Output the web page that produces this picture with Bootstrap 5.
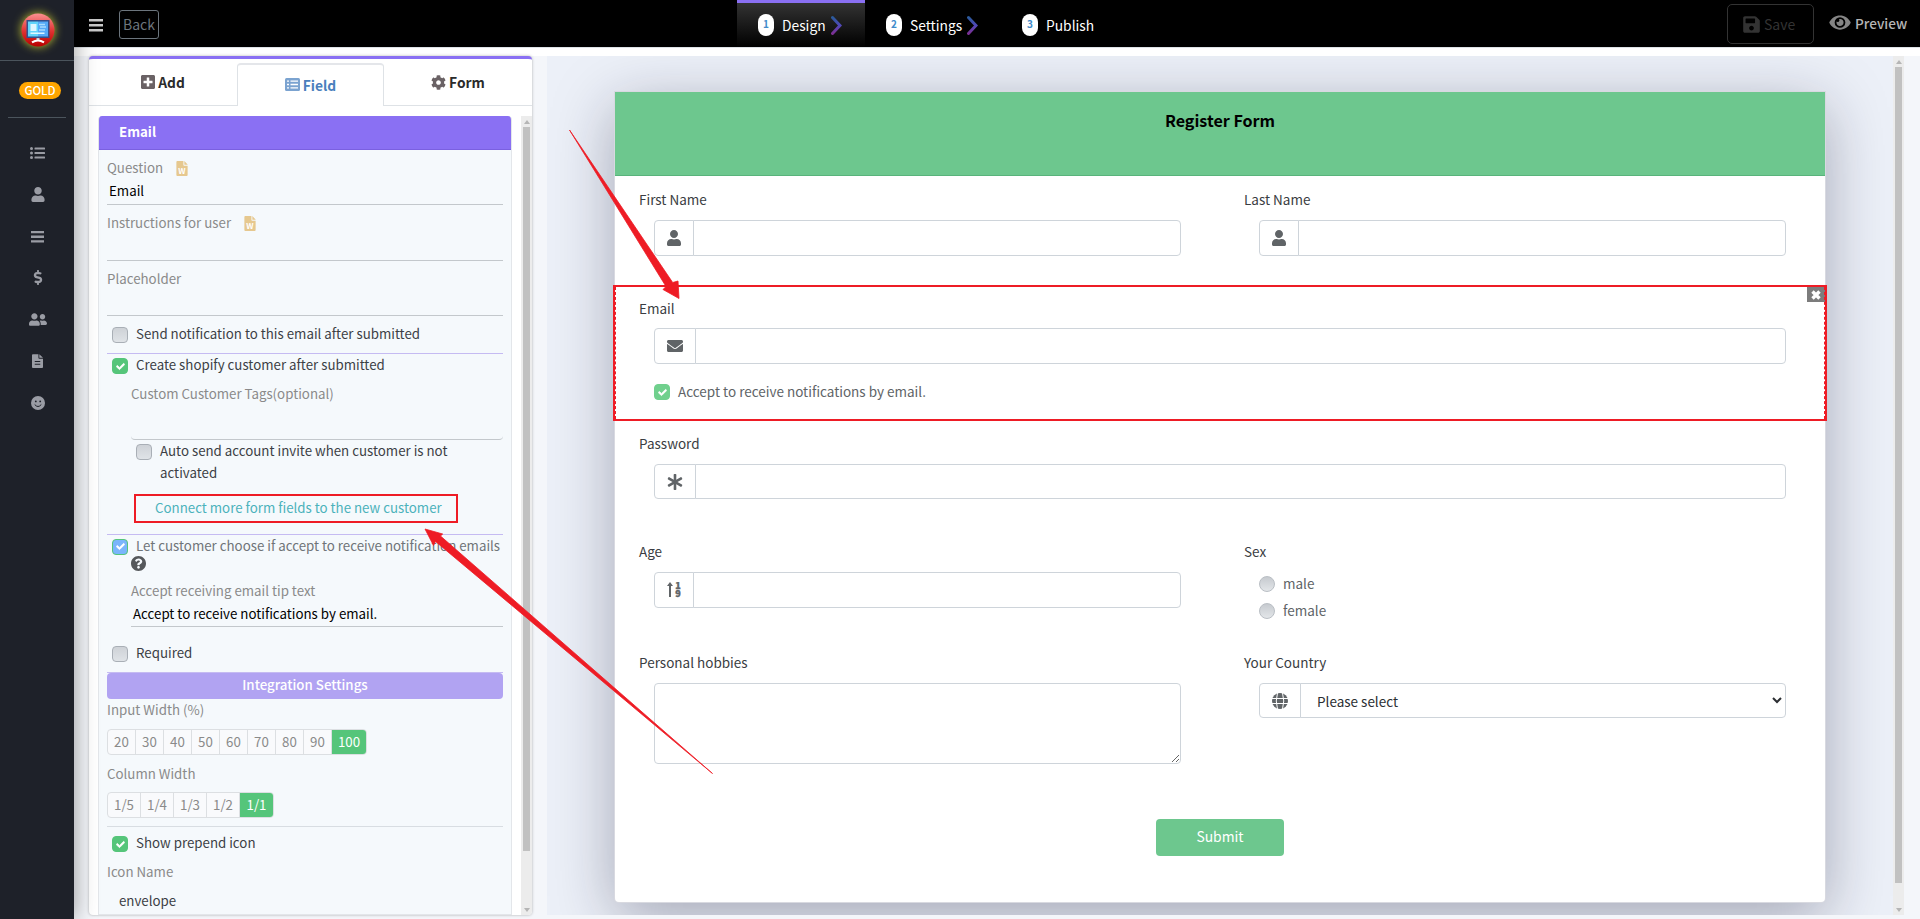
<!DOCTYPE html>
<html lang="en">
<head>
  <meta charset="UTF-8">
  <meta name="viewport" content="width=device-width, initial-scale=1.0">
  <title>Register Form</title>
  <link href="https://cdn.jsdelivr.net/npm/bootstrap@5.3.2/dist/css/bootstrap.min.css" rel="stylesheet">
  <style>
    body {
      font-family: "Noto Sans CJK SC", "Open Sans", sans-serif;
      font-size: 14px;
      line-height: 24px;
      color: #3c3f45;
      height: 919px;
      overflow: hidden;
      background: #f4f6fa;
    }
    svg { fill: currentColor; flex: none; display: block; }

    /* sidebar */
    .side { width: 74px; flex: none; background: #1e2129; color: #9a9ca4; box-shadow: 0 0 22px rgba(0,0,0,.4); z-index: 3; }
    .side-logo { height: 61px; border-bottom: 1px solid #4b545c; padding-left: 1px; }
    .side-logo svg { filter: drop-shadow(0 0 5px #c8c832); }
    .gold { width: 42px; height: 17px; margin: 21px 0 17px 19px; border-radius: 9px; background: #ffa500; color: #fff; font-size: 11.5px; line-height: 17px; font-weight: 500; text-align: center; }
    .side-line { margin: 1px 8px 14px; height: 1px; background: #4b545c; }
    .side-item { height: 41.7px; padding-left: 1px; }

    /* top bar */
    .topbar { height: 47px; background: #000; color: #fff; }
    .gap-bar { height: 9px; background: #fff; border-top: 1px solid #dee2e6; }
    .back-btn { width: 40px; height: 29px; border: 1px solid #6c757d; border-radius: 3px; color: #6c757d; line-height: 26px; text-align: center; margin: 10px 0 0 16px; }
    .step { height: 47px; padding: 10px 0 0 21px; width: 128px; border-top: 3px solid transparent; font-size: 13.8px; }
    .step.on { border-color: #8a70f3; background: linear-gradient(#333, #000); }
    .step b { width: 16px; height: 22px; border-radius: 8px; background: #fff; color: #428bca; font-size: 10px; line-height: 20px; text-align: center; margin: 1px 8px 0 0; }
    .save-btn { width: 87px; height: 40px; border: 1px solid #333; border-radius: 5px; color: #333; padding-left: 15px; }
    .preview-btn { color: #b5b5b5; font-weight: 500; margin: 0 16px 0 15px; width: 75px; padding-bottom: 6px; font-size: 13.6px; }

    /* editor card */
    .editor { width: 443px; height: 859px; flex: none; margin-left: 15px; background: #fff; border-top: 3px solid #8a70f3; border-radius: 4px; box-shadow: 0 0 3px rgba(0,0,0,.3); overflow: hidden; font-size: 13.3px; }
    .tabs { height: 47px; font-size: 13.8px; font-weight: 700; color: #2b2b2b; }
    .tab { flex: 1; border-bottom: 1px solid #dee2e6; gap: 3px; }
    .tab svg { color: #6a6265; }
    .tab.on { flex: 0 0 147px; margin-top: 4px; padding-bottom: 2px; border: 1px solid #dee2e6; border-top: 2px solid #e4e6ea; border-bottom: 0; border-radius: 4px 4px 0 0; color: #4a80bd; }
    .tab.on svg { color: #7ba3d0; }
    .panel { width: 414px; flex: none; margin: 10px 9px 0 9px; background: #f5f9fc; border: 1px solid #e3e6ea; border-top: 0; border-radius: 4px 4px 0 0; overflow: hidden; padding: 0 8px; }
    .panel-head { height: 34px; margin: 0 -9px 7px; padding-left: 21px; background: #8a70f3; border-bottom: 1px solid #7a60e0; color: #fff; font-weight: 700; line-height: 32px; }
    .lbl { color: #8a8a8a; height: 24px; padding-bottom: 2px; display: flex; align-items: center; }
    .lbl svg { margin-left: 13px; }
    .line-input { height: 24px; line-height: 20px; border-bottom: 1px solid #c3c8cc; color: #000; padding-left: 2px; }
    .indent { margin-left: 24px; }
    .opt { display: flex; align-items: center; gap: 8px; padding: 0 0 2px 5px; }
    .box { width: 16px; height: 16px; margin-top: 2px; border: 1px solid #a9afb6; border-radius: 4px; background: linear-gradient(#ced2d7, #dfe3e7); display: flex; align-items: center; justify-content: center; flex: none; color: #fff; }
    .box.ok { background: #55c57a; border-color: #55c57a; }
    .box.blue { background: #7ab5fb; border-color: #55c57a; }
    .box.pale { background: #70d08d; border-color: #70d08d; }
    .box svg { stroke: currentColor; stroke-width: 40; }
    .violet-line { border-bottom: 1px solid #c5bbf2; }
    .link-box { width: 324px; height: 29px; margin: 10px 0 11px 27px; border: 2px solid #ee1c25; color: #4bb2bb; line-height: 24px; padding-left: 19px; white-space: nowrap; }
    .integ { height: 26px; border-radius: 4px; background: #b1a3f2; color: #fff; font-weight: 500; text-align: center; }
    .seg { display: flex; width: max-content; height: 26px; border: 1px solid #dcdfe2; border-radius: 4px; background: #f9fafc; color: #8a8a8a; line-height: 24px; overflow: hidden; }
    .seg span { width: 28px; text-align: center; border-right: 1px solid #dcdfe2; }
    .seg.frac span { width: 33px; }
    .seg span.on { background: #55c57a; color: #fff; border: 0; }
    .seg span.on.wide { width: 34px; }

    /* scroll bars */
    .bar { width: 11px; background: #ececec; flex: none; }
    .bar i { display: block; width: 7px; background: #c1c1c1; }
    .bar svg { color: #b5b5b5; margin: 4px 0 3px; }

    /* form preview */
    .stage { width: 1357px; height: 859px; flex: none; margin-left: 15px; background: #ecf0f8; overflow: hidden; font-size: 13.5px; }
    .paper { width: 1210px; height: 810px; flex: none; margin: 36px 0 0 68px; background: #fff; box-shadow: 0 0 0 1px #d8d9e0, 0 15px 62px rgba(20,20,50,.34); border-radius: 0 0 4px 4px; }
    .paper-head { height: 84px; background: #6dc78e; border-bottom: 1px solid #59b37b; color: #000; font-size: 16.1px; font-weight: 700; text-align: center; padding-top: 16px; }
    .fld { padding: 12px 39px 0; color: #3a3d42; }
    .fld > label { display: block; margin: 0 0 8px -15px; height: 24px; line-height: 22px; }
    .input-group { height: 36px; flex-wrap: nowrap; }
    .input-group-text { width: 40px; padding: 0; justify-content: center; background: #fff; border-color: #ced4da; color: #606467; border-radius: 4px; }
    .input-group-text.w42 { width: 42px; }
    .form-control { border-color: #ced4da; border-radius: 4px; font-size: 13.5px; background: #fff; }
    select.form-control { appearance: auto; padding: 0 3px 0 12px; color: #2c2f33; }
    .rad-row { height: 27px; padding-bottom: 2px; color: #606467; }
    .rad { width: 16px; height: 16px; margin-top: 2px; border-radius: 50%; border: 1px solid #b9bec4; background: linear-gradient(#c6cacf, #e3e6e9); }
    .picked { height: 135px; }
    .pick-frame { inset: 0 -2px -1px; border: 2px solid #ee1c25; }
    .pick-frame::after { content: ""; position: absolute; inset: 0; border: dashed #ee1c25; border-width: 0 1px; }
    .close-badge { right: 0; top: 2px; width: 18px; height: 15px; background: #7c7c7c; color: #fff; }
    .submit { width: 128px; height: 37px; margin: 0 auto; background: #6dc78e; color: #fff; border-radius: 4px; line-height: 35px; text-align: center; font-size: 13.9px; }
    .marks { left: 0; top: 0; z-index: 9; pointer-events: none; color: #ee1c25; stroke: #ee1c25; stroke-width: .8; }
  </style>
</head>
<body>
  <svg width="0" height="0" class="position-absolute">
    <symbol id="user" viewBox="0 0 448 512"><path d="M224 256c70.7 0 128-57.3 128-128S294.7 0 224 0 96 57.3 96 128s57.3 128 128 128zm89.6 32h-16.7c-22.2 10.2-46.9 16-72.9 16s-50.6-5.8-72.9-16h-16.7C60.2 288 0 348.2 0 422.4V464c0 26.5 21.5 48 48 48h352c26.5 0 48-21.5 48-48v-41.6c0-74.2-60.2-134.4-134.4-134.4z"/></symbol>
    <symbol id="envelope" viewBox="0 0 512 512"><path d="M502.3 190.8c3.9-3.1 9.7-.2 9.7 4.7V400c0 26.5-21.5 48-48 48H48c-26.5 0-48-21.5-48-48V195.6c0-5 5.7-7.8 9.7-4.7 22.4 17.4 52.1 39.5 154.1 113.6 21.1 15.4 56.7 47.8 92.2 47.6 35.7.3 72-32.8 92.3-47.6 102-74.1 131.6-96.3 154-113.7zM256 320c23.2.4 56.6-29.2 73.4-41.4 132.7-96.3 142.8-104.7 173.4-128.7 5.8-4.5 9.2-11.5 9.2-18.9v-19c0-26.5-21.5-48-48-48H48c-26.5 0-48 21.5-48 48v19c0 7.4 3.4 14.3 9.2 18.9 30.6 23.9 40.7 32.4 173.4 128.7 16.8 12.2 50.2 41.8 73.4 41.4z"/></symbol>
    <symbol id="check" viewBox="-20 -20 552 552"><path d="M173.898 439.404l-166.4-166.4c-9.997-9.997-9.997-26.206 0-36.204l36.203-36.204c9.997-9.998 26.207-9.998 36.204 0L192 312.69 432.095 72.596c9.997-9.997 26.207-9.997 36.204 0l36.203 36.204c9.997 9.997 9.997 26.206 0 36.204l-294.4 294.401c-9.998 9.997-26.207 9.997-36.204-.001z"/></symbol>
    <symbol id="bars" viewBox="0 0 14 14"><path d="M0 1h14v2.5H0zM0 6h14v2.5H0zM0 11h14v2.5H0z"/></symbol>
    <symbol id="list" viewBox="0 0 15 12"><circle cx="1.5" cy="1.5" r="1.5"/><circle cx="1.5" cy="6" r="1.5"/><circle cx="1.5" cy="10.5" r="1.5"/><rect x="4.5" y=".5" width="10.5" height="2" rx=".5"/><rect x="4.5" y="5" width="10.5" height="2" rx=".5"/><rect x="4.5" y="9.5" width="10.5" height="2" rx=".5"/></symbol>
    <symbol id="word" viewBox="0 0 12 16"><path d="M1 0h6.500v4.200q0 .8.800.8H12v10q0 1-1 1H1q-1 0-1-1V1q0-1 1-1zM8.500 0L12 3.800V4H8.500z"/><text x="6" y="13.500" font-size="8.500" font-weight="700" text-anchor="middle" fill="#fff">W</text></symbol>
    <symbol id="up" viewBox="0 0 6 4"><path d="M0 4l3-4 3 4z"/></symbol>
    <symbol id="down" viewBox="0 0 6 4"><path d="M0 0l3 4 3-4z"/></symbol>
  </svg>

  <div class="d-flex h-100">
    <!-- sidebar -->
    <div class="side d-flex flex-column position-relative">
      <div class="side-logo d-flex align-items-center justify-content-center">
        <svg width="34" height="34" viewBox="0 0 34 34">
          <defs><linearGradient id="red" x2="0" y2="1"><stop stop-color="#fb9090"/><stop offset=".55" stop-color="#df3030"/><stop offset="1" stop-color="#b80000"/></linearGradient></defs>
          <circle cx="17" cy="17" r="16.5" fill="url(#red)"/>
          <rect x="5.5" y="7" width="23" height="18" fill="#344f8c"/>
          <path d="M7 8.500h10v15H7z" fill="#61d4fb"/><path d="M17 8.500h10v15H17z" fill="#55aaf8"/>
          <path d="M9.500 11h6v7h-6zM9.500 19.500h14v1.500h-14z" fill="#e0f6ff"/><path d="M18 11.500h6M19 14h6M18 17h6" stroke="#a9dcff" stroke-width="1.3"/>
          <path d="M15.500 25h3v2.500h-3z" fill="#c5cddc"/><path d="M11 29.300q6-3.800 12 0" stroke="#fff" stroke-width="2" fill="none"/>
        </svg>
      </div>
      <div class="gold">GOLD</div>
      <div class="side-line"></div>
      <div class="side-item d-flex align-items-center justify-content-center"><svg width="15" height="12"><use href="#list"/></svg></div>
      <div class="side-item d-flex align-items-center justify-content-center"><svg width="14" height="15"><use href="#user"/></svg></div>
      <div class="side-item d-flex align-items-center justify-content-center"><svg width="13" height="13"><use href="#bars"/></svg></div>
      <div class="side-item d-flex align-items-center justify-content-center"><svg width="10" height="15" viewBox="0 0 288 512"><path d="M209.2 233.4l-108-31.6C88.7 198.2 80 186.5 80 173.5c0-16.3 13.2-29.5 29.5-29.5h66.3c12.2 0 24.2 3.7 34.2 10.5 6.1 4.1 14.3 3.1 19.5-2l34.8-34c7.1-6.9 6.1-18.4-1.8-24.5C238 74.8 207.4 64.1 176 64V16c0-8.8-7.2-16-16-16h-32c-8.8 0-16 7.2-16 16v48h-2.5C45.8 64-5.4 118.7.5 183.6c4.2 46.1 39.4 83.6 83.8 96.6l102.5 30c12.5 3.7 21.2 15.3 21.2 28.3 0 16.3-13.2 29.5-29.5 29.5h-66.3C100 368 88 364.3 78 357.500c-6.100-4.100-14.300-3.100-19.500 2l-34.800 34c-7.100 6.900-6.100 18.400 1.800 24.500 24.500 19.200 55.100 29.900 86.500 30v48c0 8.800 7.200 16 16 16h32c8.800 0 16-7.200 16-16v-48.200c46.600-.9 90.300-28.600 105.700-72.700 21.500-61.600-14.600-124.800-72.500-141.700z"/></svg></div>
      <div class="side-item d-flex align-items-center justify-content-center"><svg width="18" height="15" viewBox="0 0 640 512"><path d="M192 256c61.9 0 112-50.1 112-112S253.9 32 192 32 80 82.1 80 144s50.1 112 112 112zm76.8 32h-8.3c-20.8 10-43.9 16-68.5 16s-47.6-6-68.5-16h-8.3C51.6 288 0 339.6 0 403.2V432c0 26.5 21.5 48 48 48h288c26.5 0 48-21.5 48-48v-28.8c0-63.6-51.6-115.2-115.2-115.2zM480 256c53 0 96-43 96-96s-43-96-96-96-96 43-96 96 43 96 96 96zm48 32h-3.8c-13.9 4.8-28.6 8-44.2 8s-30.3-3.2-44.2-8H432c-20.4 0-39.2 5.9-55.7 15.4 24.4 26.3 39.7 61.2 39.7 99.8v38.4c0 2.2-.5 4.3-.6 6.4H592c26.5 0 48-21.5 48-48 0-61.9-50.1-112-112-112z"/></svg></div>
      <div class="side-item d-flex align-items-center justify-content-center"><svg width="11" height="14" viewBox="0 0 12 15"><path fill-rule="evenodd" d="M1 0h6v4q0 1 1 1h4v9q0 1-1 1H1q-1 0-1-1V1q0-1 1-1zm7 0l4 4H8zM3 7.500v1h6v-1zm0 3v1h6v-1z"/></svg></div>
      <div class="side-item d-flex align-items-center justify-content-center"><svg width="14" height="14" viewBox="0 0 14 14"><circle cx="7" cy="7" r="7"/><g fill="#1e2129"><circle cx="4.8" cy="5.4" r=".9"/><circle cx="9.2" cy="5.4" r=".9"/></g><path d="M3.700 8.500q3.300 4 6.600 0" fill="none" stroke="#1e2129"/></svg></div>
    </div>

    <div class="flex-grow-1">
      <!-- top bar -->
      <div class="topbar d-flex">
        <div style="width: 663px" class="d-flex">
          <svg width="14" height="14" style="margin: 18px 0 0 15px; color: #c9c9c9"><use href="#bars"/></svg>
          <div class="back-btn">Back</div>
        </div>
        <div class="step on d-flex"><b>1</b>Design<svg width="11" height="20" viewBox="0 0 11 20" style="margin: 2px 0 0 5px"><defs><linearGradient id="chev" x2="0" y2="1"><stop stop-color="#2b5a9b"/><stop offset=".5" stop-color="#5148b8"/><stop offset="1" stop-color="#7c2f92"/></linearGradient></defs><path d="M1.500 2.500L9 10.500l-7.500 8" fill="none" stroke="url(#chev)" stroke-width="3" stroke-linecap="round"/></svg></div>
        <div class="step d-flex" style="width: 136px"><b>2</b>Settings<svg width="11" height="20" viewBox="0 0 11 20" style="margin: 2px 0 0 5px"><path d="M1.500 2.500L9 10.500l-7.500 8" fill="none" stroke="url(#chev)" stroke-width="3" stroke-linecap="round"/></svg></div>
        <div class="step d-flex"><b>3</b>Publish</div>
        <div class="ms-auto d-flex" style="padding-top: 4px">
          <div class="save-btn d-flex align-items-center"><svg width="17" height="19" viewBox="0 0 448 512" class="me-1"><path d="M433.941 129.941l-83.882-83.882A48 48 0 0 0 316.118 32H48C21.49 32 0 53.49 0 80v352c0 26.51 21.49 48 48 48h352c26.51 0 48-21.49 48-48V163.882a48 48 0 0 0-14.059-33.941zM224 416c-35.346 0-64-28.654-64-64 0-35.346 28.654-64 64-64s64 28.654 64 64c0 35.346-28.654 64-64 64zm96-304.52V212c0 6.627-5.373 12-12 12H76c-6.627 0-12-5.373-12-12V108c0-6.627 5.373-12 12-12h228.52c3.183 0 6.235 1.264 8.485 3.515l3.48 3.48A11.996 11.996 0 0 1 320 111.48z"/></svg>Save</div>
          <div class="preview-btn d-flex align-items-center"><svg width="22" height="19" viewBox="0 0 576 512" class="me-1" color="#858585"><path d="M572.52 241.4C518.29 135.59 410.93 64 288 64S57.68 135.64 3.48 241.41a32.35 32.35 0 0 0 0 29.19C57.71 376.41 165.07 448 288 448s230.32-71.64 284.52-177.41a32.35 32.35 0 0 0 0-29.19zM288 400a144 144 0 1 1 144-144 143.93 143.93 0 0 1-144 144zm0-240a95.31 95.31 0 0 0-25.31 3.79 47.85 47.85 0 0 1-66.9 66.9A95.78 95.78 0 1 0 288 160z"/></svg>Preview</div>
        </div>
      </div>
      <div class="gap-bar"></div>

      <div class="d-flex">
        <!-- field editor -->
        <div class="editor">
          <div class="tabs d-flex">
            <div class="tab d-flex align-items-center justify-content-center"><svg width="14" height="16" viewBox="0 0 448 512"><path d="M400 32H48C21.5 32 0 53.5 0 80v352c0 26.5 21.5 48 48 48h352c26.5 0 48-21.5 48-48V80c0-26.5-21.5-48-48-48zm-32 252c0 6.6-5.4 12-12 12h-92v92c0 6.6-5.4 12-12 12h-56c-6.6 0-12-5.4-12-12v-92H92c-6.6 0-12-5.4-12-12v-56c0-6.6 5.4-12 12-12h92v-92c0-6.6 5.4-12 12-12h56c6.6 0 12 5.4 12 12v92h92c6.6 0 12 5.4 12 12v56z"/></svg>Add</div>
            <div class="tab on d-flex align-items-center justify-content-center"><svg width="15" height="13" viewBox="0 0 15 13"><rect width="15" height="13" rx="1.5"/><path d="M2 3.200h2M2 6.500h2M2 9.800h2M5.500 3.200H13M5.500 6.500H13M5.500 9.800H13" stroke="#fff" stroke-width="1.3"/></svg>Field</div>
            <div class="tab d-flex align-items-center justify-content-center"><svg width="15" height="15" viewBox="0 0 512 512"><path d="M487.4 315.7l-42.6-24.6c4.3-23.2 4.3-47 0-70.2l42.6-24.6c4.9-2.8 7.1-8.6 5.5-14-11.1-35.6-30-67.8-54.7-94.6-3.8-4.1-10-5.1-14.8-2.3L380.8 110c-17.9-15.4-38.5-27.3-60.8-35.1V25.8c0-5.6-3.9-10.5-9.4-11.7-36.7-8.2-74.3-7.8-109.2 0-5.5 1.2-9.4 6.1-9.4 11.7V75c-22.2 7.9-42.8 19.8-60.8 35.1L88.7 85.5c-4.9-2.8-11-1.9-14.8 2.3-24.7 26.7-43.6 58.9-54.7 94.6-1.7 5.4.6 11.2 5.5 14L67.3 221c-4.3 23.2-4.3 47 0 70.2l-42.6 24.6c-4.9 2.8-7.1 8.6-5.5 14 11.1 35.6 30 67.8 54.7 94.6 3.8 4.1 10 5.1 14.8 2.3l42.6-24.6c17.9 15.4 38.5 27.3 60.8 35.1v49.2c0 5.6 3.9 10.5 9.4 11.7 36.7 8.2 74.3 7.8 109.2 0 5.5-1.2 9.4-6.1 9.4-11.7v-49.2c22.2-7.9 42.8-19.8 60.8-35.1l42.6 24.6c4.9 2.8 11 1.9 14.8-2.3 24.7-26.7 43.6-58.9 54.7-94.6 1.5-5.5-.7-11.3-5.6-14.1zM256 336c-44.1 0-80-35.9-80-80s35.9-80 80-80 80 35.9 80 80-35.9 80-80 80z"/></svg>Form</div>
          </div>
          <div class="d-flex" style="height: 809px">
            <div class="panel">
              <div class="panel-head">Email</div>
              <div class="lbl">Question <svg width="12" height="15" color="#e6c88f"><use href="#word"/></svg></div>
              <div class="line-input">Email</div>
              <div class="lbl" style="margin-top: 7px">Instructions for user <svg width="12" height="15" color="#e6c88f"><use href="#word"/></svg></div>
              <div class="line-input" style="height: 25px"></div>
              <div class="lbl" style="margin-top: 7px">Placeholder</div>
              <div class="line-input"></div>
              <div class="opt violet-line" style="height: 38px"><span class="box"></span>Send notification to this email after submitted</div>
              <div class="opt" style="height: 24px"><span class="box ok"><svg width="9" height="9"><use href="#check"/></svg></span>Create shopify customer after submitted</div>
              <div class="indent">
                <div class="lbl" style="margin-top: 5px">Custom Customer Tags(optional)</div>
                <div class="line-input" style="height: 33px; border-radius: 4px"></div>
                <div class="opt align-items-start pb-0" style="line-height: 22px"><span class="box" style="margin-top: 4px"></span><span>Auto send account invite when customer is not<br>activated</span></div>
              </div>
              <div class="link-box">Connect more form fields to the new customer</div>
              <div class="violet-line"></div>
              <div class="opt text-nowrap" style="height: 23px; color: #6f7478"><span class="box blue"><svg width="9" height="9"><use href="#check"/></svg></span>Let customer choose if accept to receive notification emails</div>
              <div class="indent">
                <svg width="15" height="15" viewBox="8 8 496 496" style="margin: -2px 0 9px; color: #55585b"><path d="M504 256c0 136.997-111.043 248-248 248S8 392.997 8 256C8 119.083 119.043 8 256 8s248 111.083 248 248zM262.655 90c-54.497 0-89.255 22.957-116.549 63.758-3.536 5.286-2.353 12.415 2.715 16.258l34.699 26.31c5.205 3.947 12.621 3.008 16.665-2.122 17.864-22.658 30.113-35.797 57.303-35.797 20.429 0 45.698 13.148 45.698 32.958 0 14.976-12.363 22.667-32.534 33.976C247.128 238.528 216 254.941 216 296v4c0 6.627 5.373 12 12 12h56c6.627 0 12-5.373 12-12v-1.333c0-28.462 83.186-29.647 83.186-106.667 0-58.002-60.165-102-116.531-102zM256 338c-25.365 0-46 20.635-46 46 0 25.364 20.635 46 46 46s46-20.636 46-46c0-25.365-20.635-46-46-46z"/></svg>
                <div class="lbl">Accept receiving email tip text</div>
                <div class="line-input" style="height: 23px">Accept to receive notifications by email.</div>
              </div>
              <div class="opt violet-line" style="height: 46px; padding-top: 9px"><span class="box"></span>Required</div>
              <div class="integ">Integration Settings</div>
              <div class="lbl">Input Width (%)</div>
              <div class="seg" style="margin: 6px 0 8px"><span>20</span><span>30</span><span>40</span><span>50</span><span>60</span><span>70</span><span>80</span><span>90</span><span class="on wide">100</span></div>
              <div class="lbl">Column Width</div>
              <div class="seg frac" style="margin: 5px 0 8px"><span>1/5</span><span>1/4</span><span>1/3</span><span>1/2</span><span class="on">1/1</span></div>
              <div style="border-bottom: 1px solid #d8dde2"></div>
              <div class="opt" style="height: 24px; margin: 5px 0"><span class="box ok"><svg width="9" height="9"><use href="#check"/></svg></span>Show prepend icon</div>
              <div class="lbl">Icon Name</div>
              <div style="margin: 4px 0 0 12px">envelope</div>
            </div>
            <div class="bar d-flex flex-column align-items-center" style="margin-top: 10px"><svg width="6" height="4"><use href="#up"/></svg><i style="height: 724px"></i><svg width="6" height="4" class="mt-auto"><use href="#down"/></svg></div>
          </div>
        </div>

        <!-- form preview -->
        <div class="stage d-flex">
          <div class="paper">
            <div class="paper-head">Register Form</div>
            <div class="row g-0" style="height: 109px">
              <div class="col-6 fld"><label>First Name</label>
                <div class="input-group"><span class="input-group-text"><svg width="14" height="16"><use href="#user"/></svg></span><input class="form-control"></div></div>
              <div class="col-6 fld"><label>Last Name</label>
                <div class="input-group"><span class="input-group-text"><svg width="14" height="16"><use href="#user"/></svg></span><input class="form-control"></div></div>
            </div>
            <div class="fld picked position-relative">
              <label style="margin-bottom: 7px">Email</label>
              <div class="input-group"><span class="input-group-text w42"><svg width="16" height="16"><use href="#envelope"/></svg></span><input class="form-control"></div>
              <div class="d-flex align-items-center gap-2" style="margin-top: 15px; color: #606467"><span class="box pale"><svg width="9" height="9"><use href="#check"/></svg></span>Accept to receive notifications by email.</div>
              <div class="close-badge position-absolute d-flex align-items-center justify-content-center"><svg width="10" height="10" viewBox="0 0 10 10"><path d="M1.500 1.500l7 7M8.500 1.500l-7 7" stroke="#fff" stroke-width="3.4"/></svg></div>
              <div class="pick-frame position-absolute"></div>
            </div>
            <div class="fld" style="height: 108px"><label>Password</label>
              <div class="input-group" style="height: 35px"><span class="input-group-text w42"><svg width="16" height="16" viewBox="0 0 512 512"><path d="M478.21 334.093L336 256l142.21-78.093c11.795-6.477 15.961-21.384 9.232-33.037l-19.48-33.741c-6.728-11.653-21.72-15.499-33.227-8.523L296 186.718l3.475-162.204C299.763 11.061 288.937 0 275.48 0h-38.96c-13.456 0-24.283 11.061-23.994 24.514L216 186.718 77.265 102.607c-11.506-6.976-26.499-3.13-33.227 8.523l-19.48 33.741c-6.728 11.653-2.562 26.56 9.233 33.037L176 256 33.79 334.093c-11.795 6.477-15.961 21.384-9.232 33.037l19.48 33.741c6.728 11.653 21.721 15.499 33.227 8.523L216 325.282l-3.475 162.204C212.237 500.939 223.064 512 236.52 512h38.961c13.456 0 24.283-11.061 23.995-24.514L296 325.282l138.735 84.111c11.506 6.976 26.499 3.13 33.227-8.523l19.48-33.741c6.728-11.653 2.563-26.559-9.232-33.036z"/></svg></span><input class="form-control"></div></div>
            <div class="row g-0" style="height: 111px">
              <div class="col-6 fld"><label>Age</label>
                <div class="input-group"><span class="input-group-text"><svg width="14" height="16" viewBox="0 0 14 16"><path d="M3 0l3 4H4v11H2V4H0z"/><text x="11" y="7" font-size="9" font-weight="900" text-anchor="middle" stroke="currentColor" stroke-width=".4">1</text><text x="11" y="15" font-size="9" font-weight="900" text-anchor="middle" stroke="currentColor" stroke-width=".4">9</text></svg></span><input class="form-control"></div></div>
              <div class="col-6 fld"><label>Sex</label>
                <div class="rad-row d-flex align-items-center gap-2" style="margin-top: -2px"><span class="rad"></span>male</div>
                <div class="rad-row d-flex align-items-center gap-2"><span class="rad"></span>female</div></div>
            </div>
            <div class="row g-0" style="height: 180px">
              <div class="col-6 fld"><label>Personal hobbies</label>
                <textarea class="form-control" style="height: 81px"></textarea></div>
              <div class="col-6 fld"><label>Your Country</label>
                <div class="input-group" style="height: 35px"><span class="input-group-text w42"><svg width="16" height="16" viewBox="0 0 16 16"><circle cx="8" cy="8" r="8"/><path d="M0 5.500h16M0 10.500h16M5.500 0q-2.500 8 0 16M10.500 0q2.500 8 0 16" fill="none" stroke="#fff"/></svg></span><select class="form-control"><option>Please select</option></select></div></div>
            </div>
            <div class="submit">Submit</div>
          </div>
          <div class="bar ms-auto d-flex flex-column align-items-center"><svg width="6" height="4"><use href="#up"/></svg><i style="height: 816px"></i><svg width="6" height="4" class="mt-auto"><use href="#down"/></svg></div>
        </div>
      </div>
    </div>
  </div>

  <!-- pointer arrows over the page -->
  <svg class="marks position-absolute" width="1920" height="919">
    <path d="M569.500 130L672.700 282.500 678 281 679 298.500 663 289.500 666 286.500z"/>
    <path d="M712.500 773.500L440.500 536 442.700 534 425 529 433.500 545.500 435.500 541.500z"/>
  </svg>
  <script src="https://cdn.jsdelivr.net/npm/bootstrap@5.3.2/dist/js/bootstrap.bundle.min.js"></script>
</body>
</html>
